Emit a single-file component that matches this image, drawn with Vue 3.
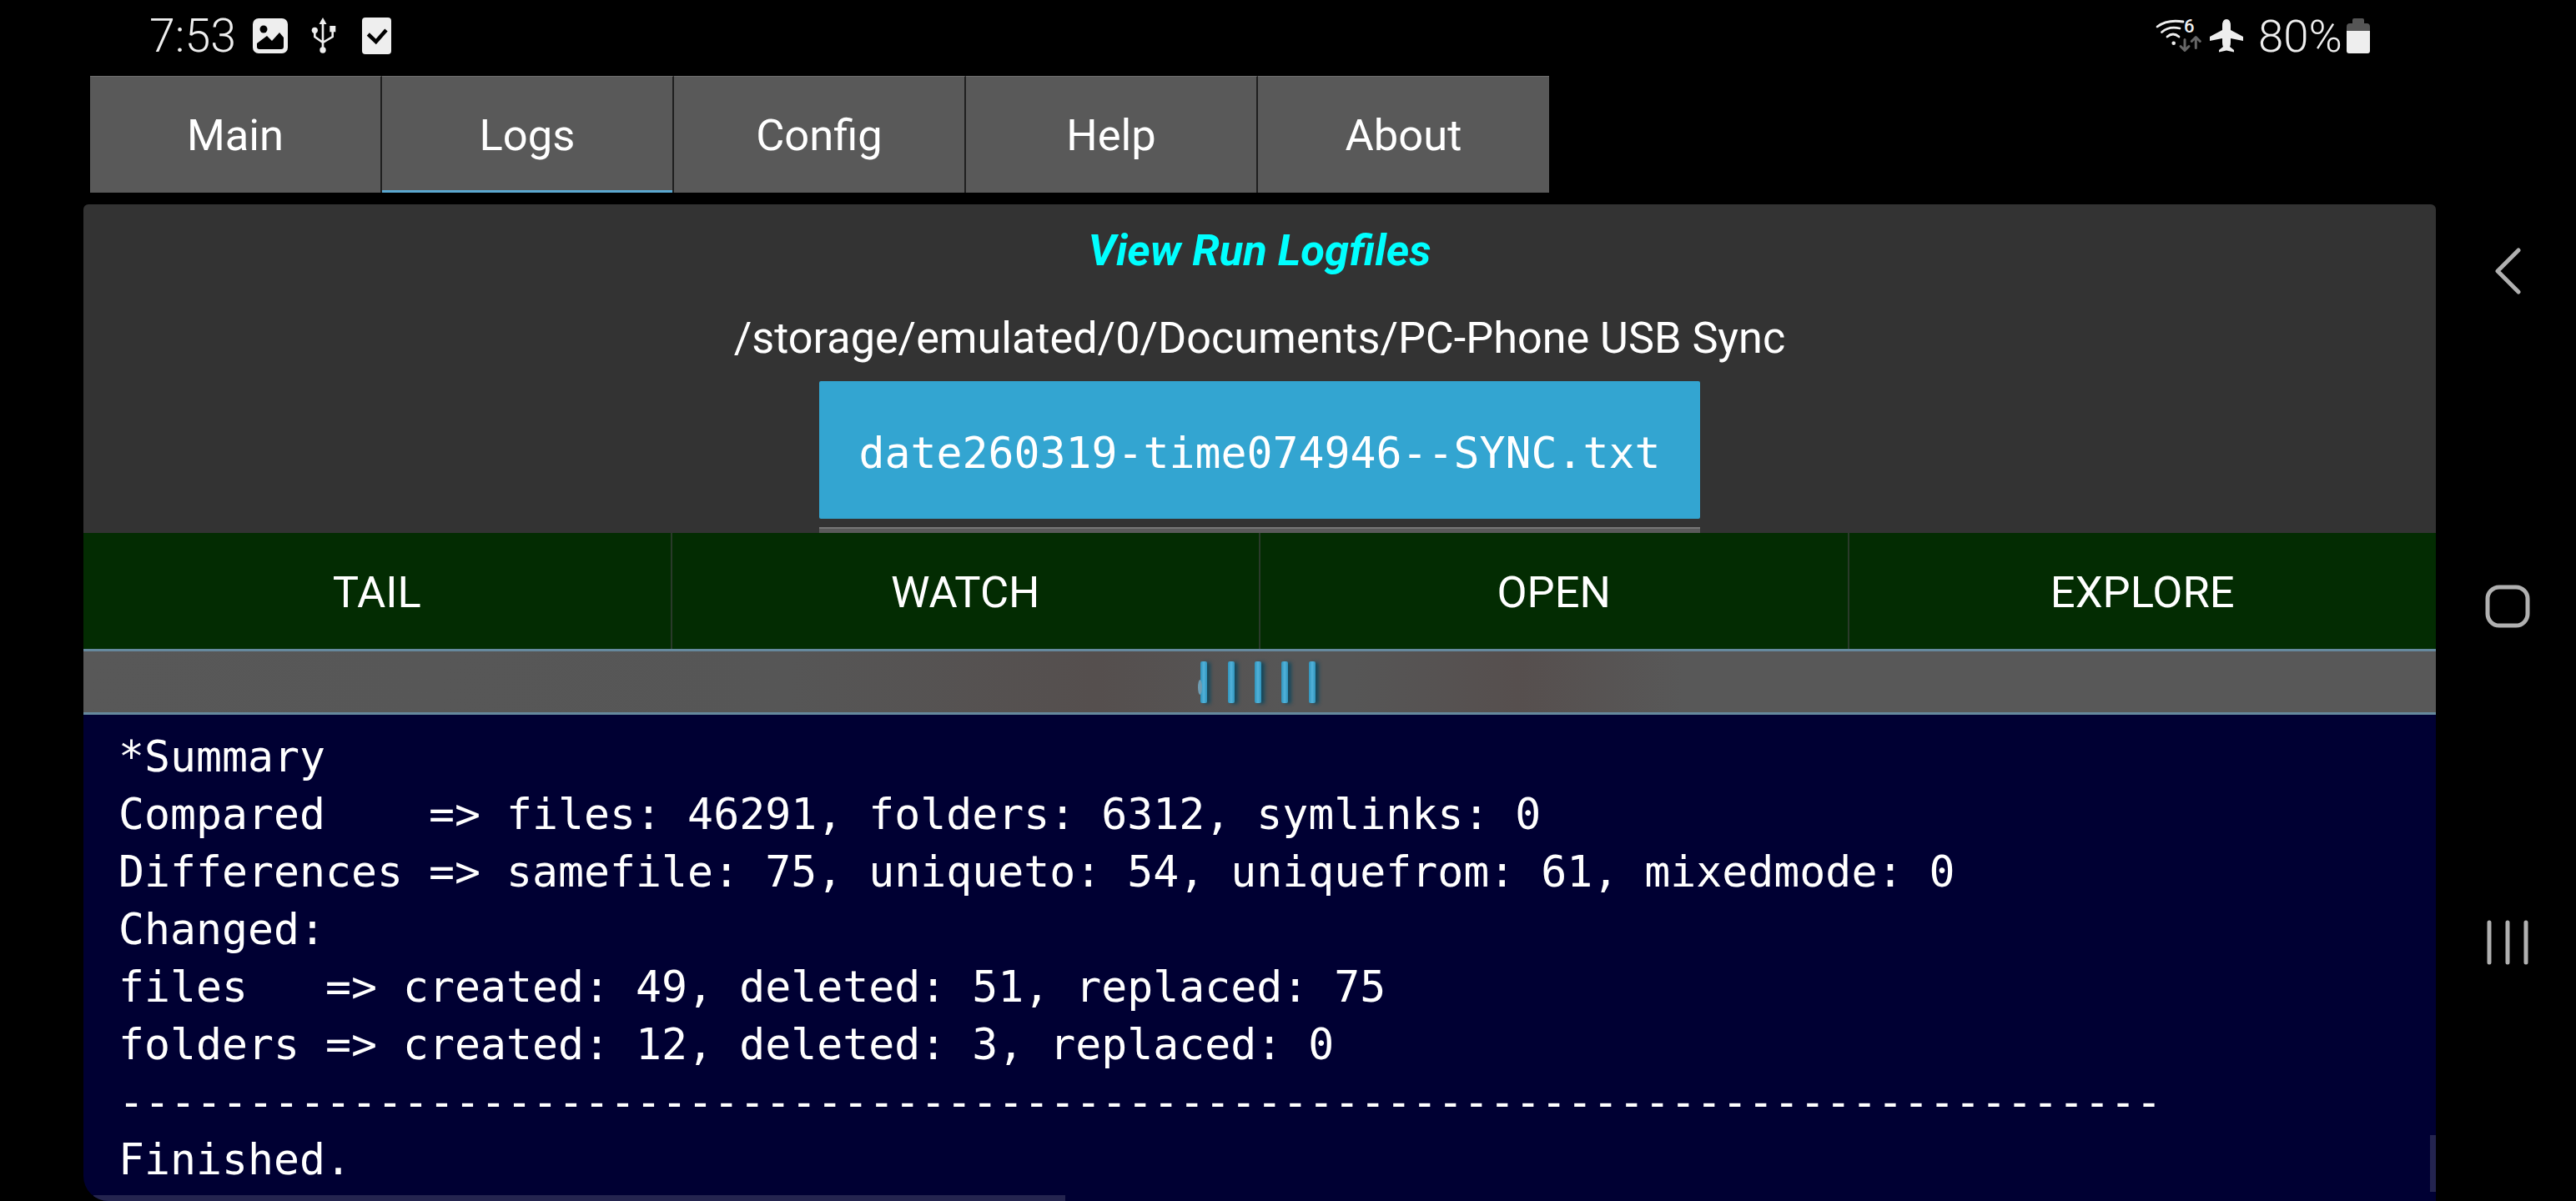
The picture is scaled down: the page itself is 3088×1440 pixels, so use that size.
<script setup>
const tabs = [
  { name: 'Main', active: false },
  { name: 'Logs', active: true },
  { name: 'Config', active: false },
  { name: 'Help', active: false },
  { name: 'About', active: false }
]
const actions = ['TAIL', 'WATCH', 'OPEN', 'EXPLORE']
const grips = [1, 2, 3, 4, 5]
const logLines = [
  '*Summary',
  'Compared    => files: 46291, folders: 6312, symlinks: 0',
  'Differences => samefile: 75, uniqueto: 54, uniquefrom: 61, mixedmode: 0',
  'Changed:',
  'files   => created: 49, deleted: 51, replaced: 75',
  'folders => created: 12, deleted: 3, replaced: 0',
  '-'.repeat(79),
  'Finished.'
]
</script>

<template>
  <div class="screen">
    <div class="main">
      <header class="status">
        <div class="status-left">
          <span class="time">7:53</span>
          <svg class="ic-image" viewBox="0 0 42 42">
            <rect width="42" height="42" rx="7" fill="#eee"/>
            <path fill="#000" d="M5 30l12-9 6 6 9-10 5 6v11a3 3 0 0 1-3 3H8a3 3 0 0 1-3-3z"/>
            <circle cx="13" cy="13" r="4.500" fill="#000"/>
          </svg>
          <svg class="ic-usb" viewBox="0 0 30 44">
            <path fill="none" stroke="#eee" stroke-width="2.600" d="M14 6v32M4.300 15v8L14 30l11.700-7v-6"/>
            <path fill="#eee" d="M14 0l4.500 8h-9z"/>
            <circle cx="4.300" cy="15.300" r="3.600" fill="#eee"/>
            <rect x="22.300" y="10" width="7" height="7.300" fill="#eee"/>
            <circle cx="14" cy="39" r="3.700" fill="#eee"/>
          </svg>
          <svg class="ic-check" viewBox="0 0 35 44">
            <rect width="35" height="44" rx="4" fill="#eee"/>
            <path fill="none" stroke="#000" stroke-width="4.500" d="M7.300 20l9.400 9L29 15"/>
          </svg>
        </div>
        <div class="status-right">
          <svg class="ic-wifi" viewBox="0 -8 55 56">
            <g fill="none" stroke="#eee" stroke-width="2.800" stroke-linecap="round">
              <path d="M2 9Q14 0 33 3"/>
              <path d="M7.500 15.500Q16 8 29 11"/>
              <path d="M14 21Q21 15 28 21"/>
            </g>
            <circle cx="21.700" cy="28.700" r="2.300" fill="#eee"/>
            <text x="34" y="16" class="wifi-six">6</text>
            <g fill="none" stroke="#666" stroke-width="3" stroke-linecap="round" stroke-linejoin="round">
              <path d="M35 24.500v13M30 32.500l5 5 5-5"/>
              <path d="M48.300 34.500v-13M43.300 26.500l5-5 5 5"/>
            </g>
          </svg>
          <svg class="ic-plane" viewBox="0 0 42 40">
            <path fill="#eee" d="M21 0q5 0 5 8v5l15 8v5l-15-3v5q0 3-1 5l5 4v2.500l-9-2-9 2V37l5-4q-1-2-1-5v-5L1 26v-5l15-8V8q0-8 5-8z"/>
          </svg>
          <span class="battery-text">80%</span>
          <svg class="ic-battery" viewBox="0 0 28 42">
            <path fill="#555" d="M9 0h10a2 2 0 0 1 2 2v4h3a4 4 0 0 1 4 4v6H0v-6a4 4 0 0 1 4-4h3V2a2 2 0 0 1 2-2z"/>
            <path fill="#eee" d="M0 15h28v24a3 3 0 0 1-3 3H3a3 3 0 0 1-3-3z"/>
          </svg>
        </div>
      </header>

      <nav class="tabs">
        <div v-for="t in tabs" :key="t.name" class="tab" :class="{ active: t.active }">{{ t.name }}</div>
      </nav>

      <section class="panel">
        <div class="head">
          <h1 class="title">View Run Logfiles</h1>
          <div class="path">/storage/emulated/0/Documents/PC-Phone USB Sync</div>
          <div class="file-box">
            <div class="file">date260319-time074946--SYNC.txt</div>
            <div class="file-next"></div>
          </div>
        </div>

        <div class="actions">
          <div v-for="a in actions" :key="a" class="action">{{ a }}</div>
        </div>

        <div class="splitter">
          <span v-for="g in grips" :key="g" class="grip"></span>
        </div>

        <div class="log">
          <div v-for="(l, i) in logLines" :key="i" class="line">{{ l }}</div>
          <span class="scroll-h"></span>
          <span class="scroll-v"></span>
        </div>
      </section>
    </div>

    <aside class="sysnav">
      <svg class="nav-back" viewBox="0 0 32 56">
        <path fill="none" stroke="#b0b0b0" stroke-width="5" stroke-linecap="round" stroke-linejoin="round" d="M29 3L4 28l25 25"/>
      </svg>
      <svg class="nav-home" viewBox="0 0 54 52">
        <rect x="3" y="3" width="48" height="46" rx="14" fill="none" stroke="#b0b0b0" stroke-width="5"/>
      </svg>
      <svg class="nav-recent" viewBox="0 0 50 54">
        <g stroke="#b0b0b0" stroke-width="5" stroke-linecap="round">
          <path d="M3 3v48M25 3v48M47 3v48"/>
        </g>
      </svg>
    </aside>
  </div>
</template>

<style>
html, body { margin: 0; background: #000; }
</style>

<style scoped>
.screen {
  width: 3088px;
  height: 1440px;
  background: #000;
  display: flex;
  overflow: hidden;
  font-family: Roboto, "Open Sans", sans-serif;
  color: #fff;
}
.main {
  width: 2820px;
  margin-left: 100px;
  display: flex;
  flex-direction: column;
  height: 1440px;
}
.status {
  height: 91px;
  flex: none;
  box-sizing: border-box;
  padding: 0 79px 0 79px;
  display: flex;
  justify-content: space-between;
  align-items: flex-start;
  color: #eee;
}
.status-left, .status-right { display: flex; align-items: center; height: 86px; }
.time { font-size: 55.500px; font-weight: 300; width: 124px; }
.ic-image { width: 42px; height: 42px; margin-right: 28px; }
.ic-usb { width: 30px; height: 44px; margin-right: 31px; }
.ic-check { width: 35px; height: 44px; }
.ic-wifi { width: 55px; height: 56px; margin-right: 9px; }
.ic-plane { width: 42px; height: 40px; margin-right: 17px; }
.battery-text { font-size: 54.500px; font-weight: 300; width: 106px; }
.ic-battery { width: 28px; height: 42px; }
.wifi-six { font: 500 22px Roboto, sans-serif; fill: #eee; }

.tabs { display: flex; height: 140px; flex: none; margin-left: 8px; }
.tab {
  width: 350px;
  box-sizing: border-box;
  background: #595959;
  border-top: 1px solid #6e6e6e;
  border-right: 2px solid #1f1f1f;
  display: flex;
  align-items: center;
  justify-content: center;
  font-size: 52.500px;
}
.tab:last-child { border-right: 0; width: 349px; }
.tab.active { box-shadow: inset 0 -3px 0 #5aa7cf; }

.panel {
  margin-top: 14px;
  flex: 1;
  display: flex;
  flex-direction: column;
  border-radius: 6px 6px 0 30px;
  overflow: hidden;
  min-height: 0;
}
.head {
  height: 394px;
  flex: none;
  background: #333;
  display: flex;
  flex-direction: column;
  align-items: center;
  overflow: hidden;
}
.title {
  margin: 0;
  height: 106px;
  line-height: 110px;
  font-size: 52.500px;
  font-weight: 700;
  font-style: italic;
  color: #00ffff;
}
.path { height: 106px; line-height: 110px; font-size: 52.200px; }
.file-box { width: 1056px; }
.file {
  height: 165px;
  line-height: 172px;
  background: #33a5d1;
  border-radius: 2px;
  text-align: center;
  font-family: "DejaVu Sans Mono", "Liberation Mono", monospace;
  font-size: 51.500px;
}
.file-next {
  margin-top: 10px;
  height: 7px;
  background: #5a5a5a;
  border-top: 2px solid #777;
  box-sizing: border-box;
}
.actions { display: flex; height: 139px; flex: none; background: #032c02; }
.action {
  flex: 1;
  display: flex;
  align-items: center;
  justify-content: center;
  font-size: 52.500px;
  padding-top: 2px;
  border-right: 2px solid #2a3a2a;
}
.action:last-child { border-right: 0; }
.splitter {
  height: 79px;
  flex: none;
  box-sizing: border-box;
  border-top: 3px solid #66899e;
  border-bottom: 3px solid #66899e;
  background: linear-gradient(90deg, #585858 0%, #565656 30%, #554f4e 43%, #565656 51%, #565656 54%, #564f4e 61%, #585858 68%, #585858 100%);
  display: flex;
  justify-content: center;
  align-items: center;
  gap: 24.300px;
  padding-right: 4px;
}
.grip {
  position: relative;
  width: 8px;
  height: 50px;
  border-radius: 2px;
  background: linear-gradient(90deg, #2f93bb, #52b2da 50%, #2f93bb);
  box-shadow: 4px 1px 4px #16495c;
}
.grip:first-child::before {
  content: "";
  position: absolute;
  left: -3px;
  top: 22px;
  width: 5px;
  height: 18px;
  border-radius: 50%;
  background: #6f9db2;
}
.log {
  flex: 1;
  position: relative;
  box-sizing: border-box;
  background: #000033;
  padding: 16px 0 0 42px;
  font-family: "DejaVu Sans Mono", "Liberation Mono", monospace;
  font-size: 51.500px;
  line-height: 69px;
  overflow: hidden;
}
.line { white-space: pre; height: 69px; }
.scroll-h {
  position: absolute;
  left: 12px;
  bottom: 0;
  width: 1165px;
  height: 7px;
  background: #24244f;
}
.scroll-v {
  position: absolute;
  right: 0;
  bottom: 11px;
  width: 7px;
  height: 68px;
  background: #24244f;
}
.sysnav {
  flex: 1;
  display: flex;
  flex-direction: column;
  align-items: center;
  padding: 297px 0 0 4px;
  box-sizing: border-box;
  height: 1440px;
}
.nav-back { width: 32px; height: 56px; margin-bottom: 348px; }
.nav-home { width: 54px; height: 52px; margin-bottom: 350px; }
.nav-recent { width: 50px; height: 54px; }
</style>
